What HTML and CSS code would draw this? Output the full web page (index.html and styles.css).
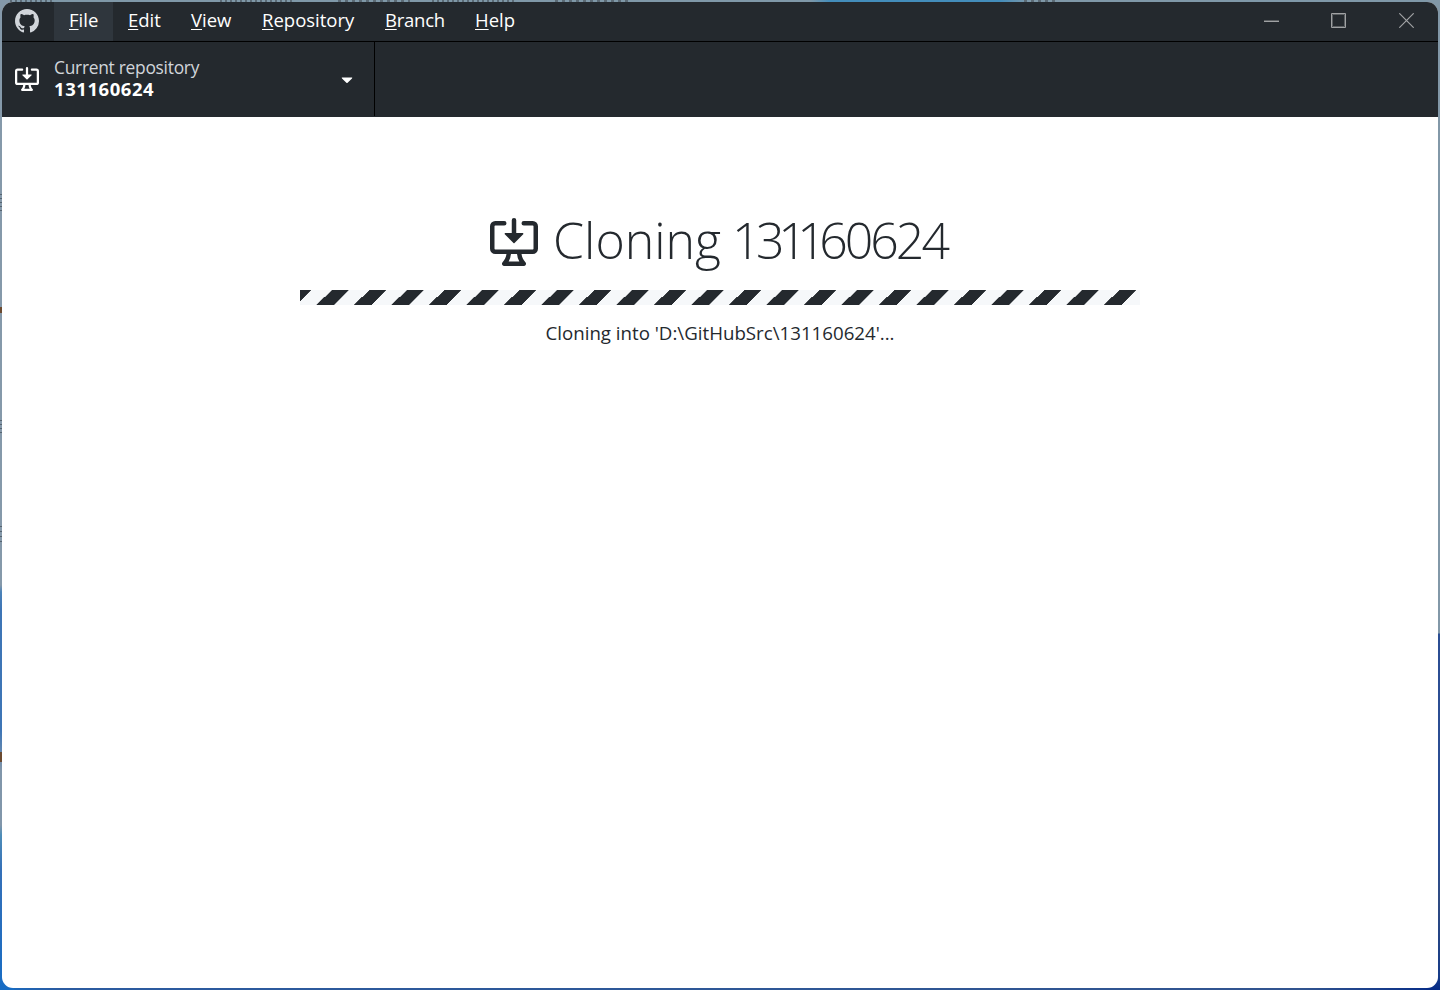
FILE: index.html
```
<!DOCTYPE html>
<html lang="en">
<head>
<meta charset="utf-8">
<title>GitHub Desktop</title>
<link rel="stylesheet" href="styles.css">
</head>
<body>
<svg class="symbols" width="0" height="0">
  <symbol id="download" viewBox="0 0 16 16">
    <path d="M4.927 5.427l2.896 2.896a.25.25 0 00.354 0l2.896-2.896A.25.25 0 0010.896 5H8.75V.75a.75.75 0 10-1.5 0V5H5.104a.25.25 0 00-.177.427z"/>
    <path d="M1.573 2.573a.25.25 0 00-.073.177v7.5a.25.25 0 00.25.25h12.5a.25.25 0 00.25-.25v-7.5a.25.25 0 00-.25-.25h-3a.75.75 0 110-1.5h3A1.75 1.75 0 0116 2.75v7.5A1.75 1.75 0 0114.25 12h-3.727c.099 1.041.52 1.872 1.292 2.757A.75.75 0 0111.25 16h-6.5a.75.75 0 01-.565-1.243c.772-.885 1.192-1.716 1.292-2.757H1.75A1.75 1.75 0 010 10.25v-7.5A1.75 1.75 0 011.75 1h3a.75.75 0 010 1.5h-3a.25.25 0 00-.177.073zM6.982 12a5.72 5.72 0 01-.765 2.5h3.566a5.72 5.72 0 01-.765-2.5H6.982z"/>
  </symbol>
</svg>
<div class="window">
  <header class="titlebar">
    <svg class="logo" viewBox="0 0 16 16"><path d="M8 0C3.58 0 0 3.58 0 8c0 3.54 2.29 6.53 5.47 7.59.4.07.55-.17.55-.38 0-.19-.01-.82-.01-1.49-2.01.37-2.53-.49-2.69-.94-.09-.23-.48-.94-.82-1.13-.28-.15-.68-.52-.01-.53.63-.01 1.08.58 1.23.82.72 1.21 1.87.87 2.33.66.07-.52.28-.87.51-1.07-1.78-.2-3.64-.89-3.64-3.95 0-.87.31-1.59.82-2.15-.08-.2-.36-1.02.08-2.12 0 0 .67-.21 2.2.82.64-.18 1.32-.27 2-.27s1.36.09 2 .27c1.53-1.04 2.2-.82 2.2-.82.44 1.1.16 1.92.08 2.12.51.56.82 1.27.82 2.15 0 3.07-1.87 3.75-3.65 3.95.29.25.54.73.54 1.48 0 1.07-.01 1.93-.01 2.2 0 .21.15.46.55.38A8.01 8.01 0 0016 8c0-4.42-3.58-8-8-8z"/></svg>
    <nav class="menu">
      <div class="item file"><span><u>F</u>ile</span></div>
      <div class="item edit"><span><u>E</u>dit</span></div>
      <div class="item view"><span><u>V</u>iew</span></div>
      <div class="item repository"><span><u>R</u>epository</span></div>
      <div class="item branch"><span><u>B</u>ranch</span></div>
      <div class="item help"><span><u>H</u>elp</span></div>
    </nav>
    <div class="controls">
      <svg viewBox="0 0 15 15"><path class="soft" d="M0 8.5H15"/><path d="M0 9.5H15" transform="translate(0 -1)"/><path class="soft" d="M0 7.5H15"/></svg>
      <svg viewBox="0 0 15 15"><path class="soft" d="M1.5 1.5H13.5V13.5H1.5Z"/><path d="M.5 .5H14.5V14.5H.5Z"/></svg>
      <svg class="close" viewBox="0 0 15 15"><path class="cross" d="M.3 .3L14.7 14.7M14.7 .3L.3 14.7"/></svg>
    </div>
  </header>
  <div class="toolbar">
    <div class="repo">
      <svg class="repo-icon"><use href="#download"/></svg>
      <div class="repo-text">
        <div class="label"><span>Current repository</span></div>
        <div class="name"><span>131160624</span></div>
      </div>
      <svg class="caret" viewBox="0 0 12 7"><path d="M1 .5H11Q11.6 .7 11 1.4L6.6 5.7Q6 6.3 5.4 5.7L1 1.4Q.4 .7 1 .5Z"/></svg>
    </div>
  </div>
  <main class="content">
    <h1 class="title"><svg class="title-icon"><use href="#download"/></svg><span class="title-text">Cloning <span class="digits"><span class="k1">1</span><span class="k2">3</span><span class="k3">1</span><span class="k4">1</span>60624</span></span></h1>
    <div class="progress"></div>
    <p class="details"><span>Cloning into 'D:\GitHubSrc\131160624'...</span></p>
  </main>
</div>
</body>
</html>
```
FILE: styles.css
```
* { box-sizing: border-box; }
body {
  margin: 0;
  width: 1440px;
  height: 990px;
  padding: 2px;
  overflow: hidden;
  font-family: "Open Sans", "Noto Sans", sans-serif;
  background:
    repeating-linear-gradient(90deg, #5b6a75 0 2px, transparent 2px 5px) 10px 0 / 44px 2px no-repeat,
    repeating-linear-gradient(90deg, #5b6a75 0 2px, transparent 2px 5px) 220px 0 / 75px 2px no-repeat,
    repeating-linear-gradient(90deg, #5b6a75 0 3px, transparent 3px 7px) 338px 0 / 72px 2px no-repeat,
    repeating-linear-gradient(90deg, #5b6a75 0 2px, transparent 2px 5px) 432px 0 / 84px 2px no-repeat,
    repeating-linear-gradient(90deg, #5b6a75 0 3px, transparent 3px 7px) 555px 0 / 75px 2px no-repeat,
    repeating-linear-gradient(90deg, #5b6a75 0 3px, transparent 3px 7px) 1024px 0 / 33px 2px no-repeat,
    repeating-linear-gradient(#566470 0 1px, transparent 1px 4px) 0 194px / 2px 18px no-repeat,
    linear-gradient(#6b4a30, #6b4a30) 0 307px / 2px 6px no-repeat,
    repeating-linear-gradient(#566470 0 1px, transparent 1px 4px) 0 420px / 2px 13px no-repeat,
    repeating-linear-gradient(#566470 0 1px, transparent 1px 5px) 0 526px / 2px 18px no-repeat,
    linear-gradient(#6b4a30, #6b4a30) 0 752px / 2px 10px no-repeat,
    linear-gradient(#8298a8 0 633px, #2b4e93 634px 850px, #304c83 900px, #173c88 975px, #062c87) right top / 14px 100% no-repeat,
    linear-gradient(#8599aa 0 585px, #4b82b8 592px, #3d75b6 610px 730px, #8196aa 770px 825px, #4e8db8 835px, #3570b8 870px, #176cc4) left top / 14px 100% no-repeat,
    linear-gradient(90deg, #7f98a8 0 810px, #438dbb 830px 1000px, #7f98a8 1030px) left top / 100% 14px no-repeat,
    linear-gradient(90deg, #176cc4, #2b5ba0 60px, #31548f 1300px, #062c87) left bottom / 100% 14px no-repeat;
}
.symbols { display: none; }
.window {
  width: 1436px;
  height: 986px;
  border-radius: 11px;
  overflow: hidden;
  background: #fff;
}
.titlebar {
  height: 40px;
  display: flex;
  align-items: flex-start;
  background: #24292e;
  border-bottom: 1px solid #000;
}
.logo { width: 24px; height: 24px; margin: 7px 15px 0 13px; fill: #d1d5da; }
.menu { display: flex; }
.item {
  height: 39px;
  padding-left: 15px;
  line-height: 35px;
  font-size: 18.5px;
  white-space: nowrap;
  color: #fff;
}
.item u { text-decoration-thickness: 1px; text-underline-offset: 2px; }
.file { width: 59px; background: #2f363d; }
.edit { width: 63px; }
.view { width: 71px; }
.repository { width: 123px; }
.branch { width: 90px; letter-spacing: -.25px; }
.help { width: 70px; }
.controls { display: flex; gap: 52px; margin: 11px 24px 0 auto; }
.controls svg { width: 15px; height: 15px; fill: none; stroke: #a0a2a4; stroke-width: 1; }
.controls .close { margin-left: 1px; }
.controls .soft { stroke: #5b5f62; }
.controls .cross { stroke-width: 1.2; }
.toolbar { height: 75px; background: #24292e; }
.repo {
  width: 373px;
  height: 74px;
  display: flex;
  border-right: 1px solid #000;
}
.repo-icon { width: 24px; height: 24px; margin: 25px 15px 0 13px; fill: #fff; }
.repo-text { flex: 1; padding-top: 14px; white-space: nowrap; }
.label { font-size: 17.4px; line-height: 22px; letter-spacing: -.28px; color: #d1d5da; }
.name { font-size: 18.5px; line-height: 21px; font-weight: 700; letter-spacing: .55px; color: #fff; }
.caret { width: 12px; height: 7px; margin: 35px 21px 0 0; fill: #fff; }
.content {
  display: flex;
  flex-direction: column;
  align-items: center;
  padding-top: 89px;
}
.title {
  height: 72px;
  margin: 0;
  display: flex;
  align-items: center;
  gap: 15px;
  font-size: 50px;
  font-weight: 300;
  line-height: 64px;
  white-space: nowrap;
  color: #24292e;
}
.title-icon { width: 48px; height: 48px; fill: #24292e; }
.title-text { padding-bottom: 4px; }
.digits { margin: 0 3px 0 -2px; letter-spacing: -3px; }
.k1 { letter-spacing: -4.5px; }
.k2 { letter-spacing: -6.5px; }
.k3 { letter-spacing: -9.5px; }
.k4 { letter-spacing: -6.5px; }
.progress {
  width: 840px;
  height: 15px;
  margin-top: 12px;
  background: #f6f8fa linear-gradient(-45deg, transparent 33%, #24292e 33%, #24292e 66%, transparent 66%) 13.8px 0 / 37.5px 15px;
}
.details { margin: 14px 0 0; font-size: 18.7px; line-height: 28px; white-space: nowrap; color: #24292e; }
```
